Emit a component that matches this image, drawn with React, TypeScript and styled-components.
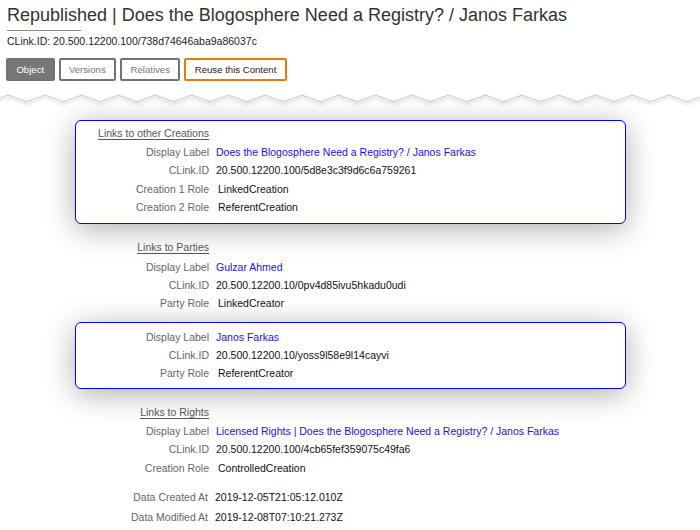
import React from "react";
import styled, { createGlobalStyle } from "styled-components";

const GlobalStyle = createGlobalStyle`
  html, body { margin: 0; padding: 0; background: #fff; }
  body { font-family: "Liberation Sans", Arial, sans-serif; color: #111; }
`;

const Page = styled.div`
  width: 700px;
  min-height: 530px;
  overflow: hidden;
`;

const Header = styled.header`
  padding: 5px 7px 0;
`;

const Title = styled.h1`
  margin: 0;
  font-size: 18px;
  font-weight: normal;
  line-height: 21px;
  color: #333;
  white-space: nowrap;
`;

const TitleRule = styled.div`
  width: 74px;
  height: 1px;
  background: #8a8a8a;
  margin-top: 4px;
`;

const IdLine = styled.div`
  margin-top: 4px;
  font-size: 10.5px;
  line-height: 13px;
  color: #222;
`;

const Toolbar = styled.nav`
  display: flex;
  gap: 4px;
  margin-top: 10px;
  margin-left: -1px;
`;

type Variant = "active" | "plain" | "accent";

const TabButton = styled.button<{ $variant: Variant }>`
  box-sizing: border-box;
  height: 23px;
  padding: 0 8.4px;
  border: 2px solid ${(p) => (p.$variant === "accent" ? "#e8790c" : "#727272")};
  border-radius: 2px;
  font-family: inherit;
  font-size: 9.6px;
  line-height: 19px;
  background: ${(p) => (p.$variant === "active" ? "#777" : "#fff")};
  color: ${(p) => (p.$variant === "active" ? "#fff" : p.$variant === "accent" ? "#222" : "#777")};
  cursor: pointer;
`;

const WaveWrap = styled.div`
  margin-top: 7px;
  height: 22px;
  line-height: 0;
`;

const Content = styled.main`
  width: 551px;
  margin: 10px auto 0;
`;

const Section = styled.section`
  display: flex;
  flex-direction: column;
  gap: 1.5px;
  & + & {
    margin-top: 10.7px;
  }
`;

const Group = styled.div<{ $highlight?: boolean; $lead?: boolean }>`
  border: 1px solid ${(p) => (p.$highlight ? "#0000ff" : "transparent")};
  border-radius: 6px;
  padding: 4.5px 0 ${(p) => (p.$lead ? 6.8 : 4.8)}px;
  background: ${(p) => (p.$highlight ? "#fff" : "transparent")};
  box-shadow: ${(p) => (p.$highlight ? "0 5px 30px rgba(0, 0, 0, 0.32)" : "none")};
  position: relative;
  z-index: ${(p) => (p.$highlight ? 1 : 2)};
`;

const Row = styled.div<{ $tall?: boolean }>`
  display: grid;
  grid-template-columns: 133.5px 1fr;
  column-gap: 7px;
  height: ${(p) => (p.$tall ? 20 : 18.4)}px;
  line-height: ${(p) => (p.$tall ? 20 : 18.4)}px;
  font-size: 10.5px;
  white-space: nowrap;
`;

const HeadingRow = styled(Row)`
  height: 15px;
  line-height: 15px;
  margin-bottom: 2.3px;
`;

const HeadingText = styled.span`
  text-align: right;
  color: #555;
  text-decoration: underline;
  text-underline-offset: 2px;
`;

const Label = styled.span`
  text-align: right;
  color: #666;
`;

type Kind = "link" | "role" | "text";

const Value = styled.span<{ $kind: Kind }>`
  color: ${(p) => (p.$kind === "link" ? "#1a0dff" : "#111")};
  padding-left: ${(p) => (p.$kind === "role" ? 2 : 0)}px;
`;

const Meta = styled.div`
  margin-top: 1.5px;
`;

type Field = { label: string; value: string; kind: Kind };
type LinkItem = { highlight?: boolean; fields: Field[] };
type LinkSection = { title: string; items: LinkItem[] };

const sections: LinkSection[] = [
  {
    title: "Links to other Creations",
    items: [
      {
        highlight: true,
        fields: [
          { label: "Display Label", value: "Does the Blogosphere Need a Registry? / Janos Farkas", kind: "link" },
          { label: "CLink.ID", value: "20.500.12200.100/5d8e3c3f9d6c6a759261", kind: "text" },
          { label: "Creation 1 Role", value: "LinkedCreation", kind: "role" },
          { label: "Creation 2 Role", value: "ReferentCreation", kind: "role" },
        ],
      },
    ],
  },
  {
    title: "Links to Parties",
    items: [
      {
        fields: [
          { label: "Display Label", value: "Gulzar Ahmed", kind: "link" },
          { label: "CLink.ID", value: "20.500.12200.10/0pv4d85ivu5hkadu0udi", kind: "text" },
          { label: "Party Role", value: "LinkedCreator", kind: "role" },
        ],
      },
      {
        highlight: true,
        fields: [
          { label: "Display Label", value: "Janos Farkas", kind: "link" },
          { label: "CLink.ID", value: "20.500.12200.10/yoss9l58e9l14cayvi", kind: "text" },
          { label: "Party Role", value: "ReferentCreator", kind: "role" },
        ],
      },
    ],
  },
  {
    title: "Links to Rights",
    items: [
      {
        fields: [
          {
            label: "Display Label",
            value: "Licensed Rights | Does the Blogosphere Need a Registry? / Janos Farkas",
            kind: "link",
          },
          { label: "CLink.ID", value: "20.500.12200.100/4cb65fef359075c49fa6", kind: "text" },
          { label: "Creation Role", value: "ControlledCreation", kind: "role" },
        ],
      },
    ],
  },
];

const meta: Field[] = [
  { label: "Data Created At", value: "2019-12-05T21:05:12.010Z", kind: "text" },
  { label: "Data Modified At", value: "2019-12-08T07:10:21.273Z", kind: "text" },
];

const Wave: React.FC = () => {
  const period = 36.7;
  const start = 8.3 - period;
  const pts: string[] = [];
  for (let k = 0; k < 22; k++) {
    const x = start + k * period;
    pts.push(`${x.toFixed(2)},7`);
    pts.push(`${(x + period / 2).toFixed(2)},13.7`);
  }
  return (
    <svg width="700" height="22" viewBox="0 0 700 22">
      <defs>
        <filter id="waveShadow" x="-5%" y="-50%" width="110%" height="250%">
          <feDropShadow dx="0" dy="2" stdDeviation="1.6" floodColor="#000" floodOpacity="0.25" />
        </filter>
      </defs>
      <polyline
        points={pts.join(" ")}
        fill="none"
        stroke="#cdcdcd"
        strokeWidth="1.1"
        filter="url(#waveShadow)"
      />
    </svg>
  );
};

export default function App() {
  return (
    <Page>
      <GlobalStyle />
      <Header>
        <Title>Republished | Does the Blogosphere Need a Registry? / Janos Farkas</Title>
        <TitleRule />
        <IdLine>CLink.ID: 20.500.12200.100/738d74646aba9a86037c</IdLine>
        <Toolbar>
          <TabButton $variant="active">Object</TabButton>
          <TabButton $variant="plain">Versions</TabButton>
          <TabButton $variant="plain">Relatives</TabButton>
          <TabButton $variant="accent">Reuse this Content</TabButton>
        </Toolbar>
      </Header>
      <WaveWrap>
        <Wave />
      </WaveWrap>
      <Content>
        {sections.map((s) => (
          <Section key={s.title}>
            {s.items.map((item, i) => (
              <Group key={i} $highlight={item.highlight} $lead={i === 0}>
                {i === 0 && (
                  <HeadingRow>
                    <HeadingText>{s.title}</HeadingText>
                    <span />
                  </HeadingRow>
                )}
                {item.fields.map((f) => (
                  <Row key={f.label}>
                    <Label>{f.label}</Label>
                    <Value $kind={f.kind}>{f.value}</Value>
                  </Row>
                ))}
              </Group>
            ))}
          </Section>
        ))}
        <Meta>
          {meta.map((f) => (
            <Row key={f.label} $tall>
              <Label>{f.label}</Label>
              <Value $kind={f.kind}>{f.value}</Value>
            </Row>
          ))}
        </Meta>
      </Content>
    </Page>
  );
}
